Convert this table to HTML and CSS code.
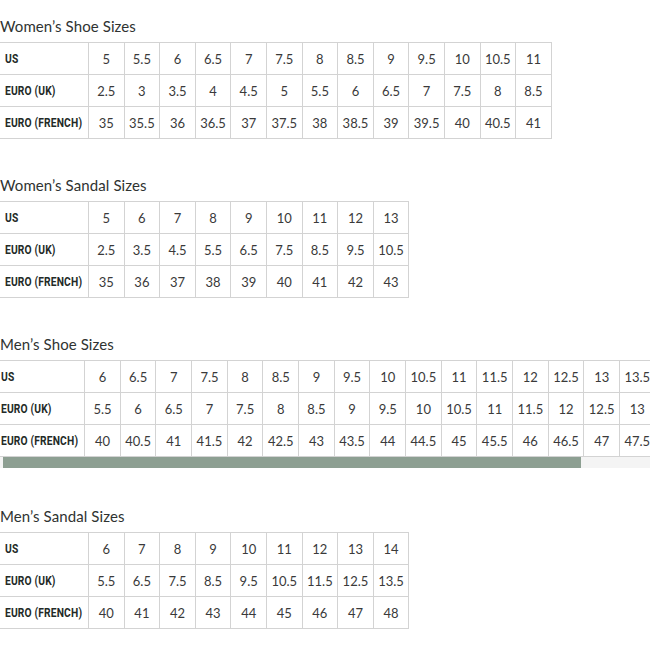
FILE: index.html
```html
<!DOCTYPE html>
<html>
<head>
<meta charset="utf-8">
<link rel="stylesheet" href="styles.css">
</head>
<body>
<div class="page">
  <section class="chart">
    <h2 class="chart-title">Women’s Shoe Sizes</h2>
    <table class="sizes cols-13">
      <tr><th><span class="label">US</span></th><td>5</td><td>5.5</td><td>6</td><td>6.5</td><td>7</td><td>7.5</td><td>8</td><td>8.5</td><td>9</td><td>9.5</td><td>10</td><td>10.5</td><td>11</td></tr>
      <tr><th><span class="label">EURO (UK)</span></th><td>2.5</td><td>3</td><td>3.5</td><td>4</td><td>4.5</td><td>5</td><td>5.5</td><td>6</td><td>6.5</td><td>7</td><td>7.5</td><td>8</td><td>8.5</td></tr>
      <tr><th><span class="label">EURO (FRENCH)</span></th><td>35</td><td>35.5</td><td>36</td><td>36.5</td><td>37</td><td>37.5</td><td>38</td><td>38.5</td><td>39</td><td>39.5</td><td>40</td><td>40.5</td><td>41</td></tr>
    </table>
  </section>

  <section class="chart">
    <h2 class="chart-title">Women’s Sandal Sizes</h2>
    <table class="sizes cols-9">
      <tr><th><span class="label">US</span></th><td>5</td><td>6</td><td>7</td><td>8</td><td>9</td><td>10</td><td>11</td><td>12</td><td>13</td></tr>
      <tr><th><span class="label">EURO (UK)</span></th><td>2.5</td><td>3.5</td><td>4.5</td><td>5.5</td><td>6.5</td><td>7.5</td><td>8.5</td><td>9.5</td><td>10.5</td></tr>
      <tr><th><span class="label">EURO (FRENCH)</span></th><td>35</td><td>36</td><td>37</td><td>38</td><td>39</td><td>40</td><td>41</td><td>42</td><td>43</td></tr>
    </table>
  </section>

  <section class="chart">
    <h2 class="chart-title">Men’s Shoe Sizes</h2>
    <div class="scroller">
      <table class="sizes wide">
        <tr><th><span class="label">US</span></th><td>6</td><td>6.5</td><td>7</td><td>7.5</td><td>8</td><td>8.5</td><td>9</td><td>9.5</td><td>10</td><td>10.5</td><td>11</td><td>11.5</td><td>12</td><td>12.5</td><td>13</td><td>13.5</td><td>14</td><td>14.5</td></tr>
        <tr><th><span class="label">EURO (UK)</span></th><td>5.5</td><td>6</td><td>6.5</td><td>7</td><td>7.5</td><td>8</td><td>8.5</td><td>9</td><td>9.5</td><td>10</td><td>10.5</td><td>11</td><td>11.5</td><td>12</td><td>12.5</td><td>13</td><td>13.5</td><td>14</td></tr>
        <tr><th><span class="label">EURO (FRENCH)</span></th><td>40</td><td>40.5</td><td>41</td><td>41.5</td><td>42</td><td>42.5</td><td>43</td><td>43.5</td><td>44</td><td>44.5</td><td>45</td><td>45.5</td><td>46</td><td>46.5</td><td>47</td><td>47.5</td><td>48</td><td>48.5</td></tr>
      </table>
    </div>
    <div class="scrollbar"><div class="scrollbar-thumb"></div></div>
  </section>

  <section class="chart chart-last">
    <h2 class="chart-title">Men’s Sandal Sizes</h2>
    <table class="sizes cols-9">
      <tr><th><span class="label">US</span></th><td>6</td><td>7</td><td>8</td><td>9</td><td>10</td><td>11</td><td>12</td><td>13</td><td>14</td></tr>
      <tr><th><span class="label">EURO (UK)</span></th><td>5.5</td><td>6.5</td><td>7.5</td><td>8.5</td><td>9.5</td><td>10.5</td><td>11.5</td><td>12.5</td><td>13.5</td></tr>
      <tr><th><span class="label">EURO (FRENCH)</span></th><td>40</td><td>41</td><td>42</td><td>43</td><td>44</td><td>45</td><td>46</td><td>47</td><td>48</td></tr>
    </table>
  </section>
</div>
</body>
</html>
```

FILE: styles.css
```css
html, body {
  margin: 0;
  padding: 0;
  background: #ffffff;
}

.page {
  padding-top: 16px;
  overflow: hidden;
}

.chart {
  margin: 0 0 36px 0;
}

.chart-last {
  padding-top: 2px;
}

.chart-title {
  margin: 0 0 6px 0;
  font-family: "Lato", "Open Sans", sans-serif;
  font-weight: 400;
  font-size: 15px;
  line-height: 20px;
  color: #2f3331;
  letter-spacing: 0.1px;
}

.sizes {
  border-collapse: collapse;
  table-layout: fixed;
  margin-left: -4px;
  font-family: "Lato", "Open Sans", sans-serif;
  color: #3a3a3a;
}

.cols-13 {
  width: 555px;
}

.cols-9 {
  width: 412px;
}

.sizes th,
.sizes td {
  border: 1px solid #d3d3d3;
  height: 31px;
  padding: 0;
  vertical-align: middle;
}

.sizes th {
  width: 83px;
  padding-left: 8px;
  text-align: left;
  white-space: nowrap;
  overflow: hidden;
}

.label {
  display: inline-block;
  vertical-align: middle;
  line-height: 14px;
  margin-top: -3px;
  font-family: "Roboto", "Liberation Sans", sans-serif;
  font-weight: 700;
  font-size: 12.5px;
  letter-spacing: 0.2px;
  color: #232a27;
  transform: scaleX(0.82);
  transform-origin: left center;
}

.sizes td {
  width: 34.6px;
  text-align: center;
  font-size: 13px;
  white-space: nowrap;
}

.scroller {
  width: 650px;
  overflow: hidden;
}

.sizes.wide {
  width: 735px;
  margin-left: -8px;
}

.scrollbar {
  width: 650px;
  height: 11px;
  background: #f4f4f4;
}

.scrollbar-thumb {
  width: 578px;
  height: 100%;
  margin-left: 3px;
  background: #8d9f92;
}
```
